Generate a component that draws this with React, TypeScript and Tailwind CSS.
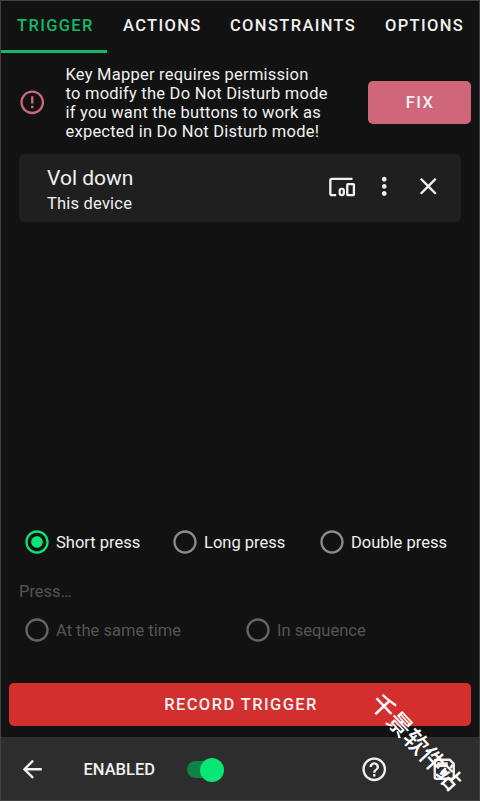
import React from 'react';
import clsx from 'clsx';
import {
  MdArrowBack,
  MdClose,
  MdErrorOutline,
  MdHelpOutline,
  MdMoreVert,
  MdOutlineSave,
  MdRadioButtonChecked,
  MdRadioButtonUnchecked,
} from 'react-icons/md';

function DevicesIcon() {
  return (
    <svg width="28" height="28" viewBox="0 0 24 24" fill="none" stroke="currentColor" strokeWidth="2">
      <path d="M21 5H3.4Q2 5 2 6.400V17.600Q2 19 3.400 19H7" />
      <rect x="10" y="13.500" width="3.600" height="5.500" rx="1.800" strokeWidth="1.900" />
      <rect x="16.500" y="9.500" width="5.700" height="9.500" rx="0.500" />
    </svg>
  );
}

function Radio({ label, checked, disabled, className }: { label: string; checked?: boolean; disabled?: boolean; className?: string }) {
  const Icon = checked ? MdRadioButtonChecked : MdRadioButtonUnchecked;
  return (
    <label className={clsx('flex items-center gap-[5px] text-[16.5px] whitespace-nowrap', disabled ? 'text-[#555555]' : 'text-[#f0f0f0]', className)}>
      <Icon
        size={28}
        className={clsx('shrink-0', checked ? 'text-[#08e676]' : disabled ? 'text-[#666666]' : 'text-[#8c8c8c]')}
      />
      <span className="pt-[2px]">{label}</span>
    </label>
  );
}

export default function App() {
  return (
    <div className="relative flex h-[801px] w-[480px] flex-col overflow-hidden border border-[#424242] bg-[#121212] font-['Roboto',sans-serif] text-[#f0f0f0]">
      <nav className="flex h-[52px] shrink-0 text-[16.5px] leading-[50px] font-medium tracking-[1.35px] whitespace-nowrap">
        <div className="w-[106px] border-b-[3px] border-[#14b866] pl-[16px] text-[#14b866]">TRIGGER</div>
        <div className="w-[107px] pl-[16px]">ACTIONS</div>
        <div className="w-[155px] pl-[16px]">CONSTRAINTS</div>
        <div className="pl-[16px]">OPTIONS</div>
      </nav>

      <section className="flex h-[101px] shrink-0 items-center pb-[2px] pl-[17px]">
        <MdErrorOutline size={28.5} className="shrink-0 text-[#cf667a]" />
        <p className="ml-[19px] w-[302px] text-[16.5px] leading-[19px] tracking-[0.23px] whitespace-nowrap">
          Key Mapper requires permission
          <br />
          to modify the Do Not Disturb mode
          <br />
          if you want the buttons to work as
          <br />
          expected in Do Not Disturb mode!
        </p>
        <button className="h-[43px] w-[103px] shrink-0 rounded-[5px] bg-[#cf667a] pt-[2px] pl-[2px] text-[16.5px] font-medium tracking-[1.4px]">
          FIX
        </button>
      </section>

      <section className="mx-[18px] flex h-[68px] w-[442px] shrink-0 items-center rounded-[5px] bg-[#1f1f1f] pb-[3px] pl-[28px]">
        <div className="w-[281px] pt-[8px]">
          <div className="text-[21px] leading-[25px]">Vol down</div>
          <div className="text-[16.5px] leading-[25px] tracking-[0.2px]">This device</div>
        </div>
        <DevicesIcon />
        <MdMoreVert size={28.5} className="ml-[14px]" />
        <MdClose size={28.5} className="ml-[15px]" />
      </section>

      <section className="mt-[306px] flex shrink-0 flex-col">
        <div className="flex h-[28px] pl-[22px]">
          <Radio label="Short press" checked className="w-[148px]" />
          <Radio label="Long press" className="w-[147px]" />
          <Radio label="Double press" />
        </div>
        <div className="mt-[26px] ml-[18px] h-[20px] text-[16.5px] leading-[20px] text-[#555555]">Press…</div>
        <div className="mt-[14px] flex h-[28px] pl-[22px]">
          <Radio label="At the same time" disabled className="w-[221px]" />
          <Radio label="In sequence" disabled />
        </div>
      </section>

      <button className="mx-[8px] mt-[39px] h-[43px] w-[462px] shrink-0 rounded-[5px] bg-[#d32f2f] pt-[2px] pl-[2px] text-[16.5px] font-medium tracking-[1.4px]">
        RECORD TRIGGER
      </button>

      <footer className="mt-[11px] flex flex-1 items-center bg-[#2d2d2d] pt-[2px] pl-[17px]">
        <MdArrowBack size={28.5} />
        <span className="ml-[37px] w-[103px] pt-[2px] text-[16.5px] font-medium">ENABLED</span>
        <div className="flex h-[17px] w-[37px] items-center justify-end rounded-full bg-[#0c8446]">
          <div className="size-[24px] shrink-0 rounded-full bg-[#08e676]" />
        </div>
        <MdHelpOutline size={28.5} className="ml-[136px]" />
        <MdOutlineSave size={28.5} className="ml-[42px]" />
      </footer>

      <div className="absolute top-[728px] left-[355px] w-[122px] rotate-[47deg] text-center font-['Noto_Sans_CJK_SC',sans-serif] text-[24px] leading-[24px] font-medium whitespace-nowrap text-white">
        千景软件站
      </div>
    </div>
  );
}
